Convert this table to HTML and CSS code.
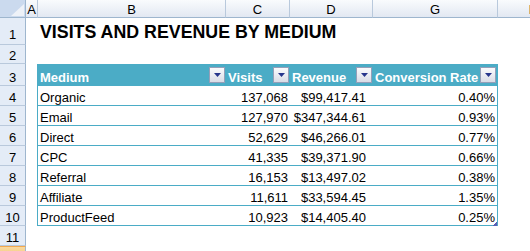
FILE: index.html
```html
<!DOCTYPE html>
<html lang="en">
    <head>
        <meta charset="UTF-8">
        <title>Visits and revenue by medium</title>
        <link rel="stylesheet" href="styles.css">
    </head>

    <body class="sheet">
        <div class="sheet__colheads">
            <div class="sheet__corner">
                <svg class="sheet__corner__icon" width="25" height="17" viewBox="0 0 25 17">
                    <polygon points="24,4 24,16 11,16" fill="#eef2f8"/>
                </svg>
            </div>
            <div class="sheet__colhead sheet__colhead--a">A</div>
            <div class="sheet__colhead sheet__colhead--b">B</div>
            <div class="sheet__colhead sheet__colhead--c">C</div>
            <div class="sheet__colhead sheet__colhead--d">D</div>
            <div class="sheet__colhead sheet__colhead--g">G</div>
            <div class="sheet__colhead sheet__colhead--h">H</div>
        </div>

        <div class="sheet__body">
            <div class="sheet__rowheads">
                <div class="sheet__rowhead sheet__rowhead--r1">1</div>
                <div class="sheet__rowhead sheet__rowhead--r2">2</div>
                <div class="sheet__rowhead sheet__rowhead--r3">3</div>
                <div class="sheet__rowhead">4</div>
                <div class="sheet__rowhead">5</div>
                <div class="sheet__rowhead">6</div>
                <div class="sheet__rowhead">7</div>
                <div class="sheet__rowhead">8</div>
                <div class="sheet__rowhead">9</div>
                <div class="sheet__rowhead">10</div>
                <div class="sheet__rowhead">11</div>
                <div class="sheet__rowhead sheet__rowhead--selected">12</div>
            </div>

            <div class="sheet__cells">
                <h1 class="sheet__title">VISITS AND REVENUE BY MEDIUM</h1>

                <div class="report">
                    <div class="report__head">
                        <div class="report__head__cell">
                            <span>Medium</span>
                            <span class="report__filter"><svg width="7" height="4" viewBox="0 0 7 4"><polygon points="0,0 7,0 3.5,4" fill="#27358c"/></svg></span>
                        </div>
                        <div class="report__head__cell">
                            <span>Visits</span>
                            <span class="report__filter"><svg width="7" height="4" viewBox="0 0 7 4"><polygon points="0,0 7,0 3.5,4" fill="#27358c"/></svg></span>
                        </div>
                        <div class="report__head__cell">
                            <span>Revenue</span>
                            <span class="report__filter"><svg width="7" height="4" viewBox="0 0 7 4"><polygon points="0,0 7,0 3.5,4" fill="#27358c"/></svg></span>
                        </div>
                        <div class="report__head__cell">
                            <span>Conversion Rate</span>
                            <span class="report__filter"><svg width="7" height="4" viewBox="0 0 7 4"><polygon points="0,0 7,0 3.5,4" fill="#27358c"/></svg></span>
                        </div>
                    </div>

                    <div class="report__row">
                        <div class="report__cell">Organic</div>
                        <div class="report__cell report__cell--num">137,068</div>
                        <div class="report__cell report__cell--currency">$99,417.41</div>
                        <div class="report__cell report__cell--num">0.40%</div>
                    </div>
                    <div class="report__row">
                        <div class="report__cell">Email</div>
                        <div class="report__cell report__cell--num">127,970</div>
                        <div class="report__cell report__cell--currency">$347,344.61</div>
                        <div class="report__cell report__cell--num">0.93%</div>
                    </div>
                    <div class="report__row">
                        <div class="report__cell">Direct</div>
                        <div class="report__cell report__cell--num">52,629</div>
                        <div class="report__cell report__cell--currency">$46,266.01</div>
                        <div class="report__cell report__cell--num">0.77%</div>
                    </div>
                    <div class="report__row">
                        <div class="report__cell">CPC</div>
                        <div class="report__cell report__cell--num">41,335</div>
                        <div class="report__cell report__cell--currency">$39,371.90</div>
                        <div class="report__cell report__cell--num">0.66%</div>
                    </div>
                    <div class="report__row">
                        <div class="report__cell">Referral</div>
                        <div class="report__cell report__cell--num">16,153</div>
                        <div class="report__cell report__cell--currency">$13,497.02</div>
                        <div class="report__cell report__cell--num">0.38%</div>
                    </div>
                    <div class="report__row">
                        <div class="report__cell">Affiliate</div>
                        <div class="report__cell report__cell--num">11,611</div>
                        <div class="report__cell report__cell--currency">$33,594.45</div>
                        <div class="report__cell report__cell--num">1.35%</div>
                    </div>
                    <div class="report__row">
                        <div class="report__cell">ProductFeed</div>
                        <div class="report__cell report__cell--num">10,923</div>
                        <div class="report__cell report__cell--currency">$14,405.40</div>
                        <div class="report__cell report__cell--num">0.25%</div>
                    </div>

                    <span class="report__resize"></span>
                </div>
            </div>
        </div>
    </body>
</html>
```

FILE: styles.css
```css
html,
body {
    border: none;
    height: 100%;
    margin: 0 0 0 0;
    padding: 0 0 0 0;
    width: 100%;
}

:root {
    --color-table: #4bacc6;
    --color-table-font: #ffffff;
    --color-head-bg: #e4ecf7;
    --color-head-border: #9eb6ce;
    --color-head-line: #b9c9dc;
    --color-selected: #f8d394;
}

.sheet {
    background-color: #ffffff;
    color: #000000;
    font-family: "Liberation Sans", Arial, sans-serif;
    font-size: 13px;
    overflow: hidden;
}

/* column letters */

.sheet__colheads {
    display: flex;
    height: 18px;
}

.sheet__corner {
    background-color: #cbdaee;
    border-bottom: 1px solid var(--color-head-border);
    border-right: 1px solid var(--color-head-border);
    box-sizing: border-box;
    flex: none;
    width: 26px;
}

.sheet__corner__icon {
    display: block;
}

.sheet__colhead {
    align-items: flex-end;
    background: linear-gradient(#f9fbfd, #e2e8f2);
    border-bottom: 1px solid var(--color-head-border);
    border-right: 1px solid var(--color-head-line);
    box-sizing: border-box;
    display: flex;
    flex: none;
    justify-content: center;
}

.sheet__colhead--a {
    width: 12px;
}

.sheet__colhead--b {
    width: 188px;
}

.sheet__colhead--c {
    width: 64px;
}

.sheet__colhead--d {
    width: 83px;
}

.sheet__colhead--g {
    width: 125px;
}

.sheet__colhead--h {
    width: 72px;
}

/* row numbers */

.sheet__body {
    display: flex;
}

.sheet__rowheads {
    flex: none;
    width: 26px;
}

.sheet__rowhead {
    align-items: flex-end;
    background-color: var(--color-head-bg);
    border-bottom: 1px solid var(--color-head-line);
    border-right: 1px solid var(--color-head-border);
    box-sizing: border-box;
    display: flex;
    height: 20px;
    justify-content: center;
}

.sheet__rowhead--r1 {
    height: 27px;
    padding-bottom: 2px;
}

.sheet__rowhead--r2 {
    height: 19px;
}

.sheet__rowhead--r3 {
    height: 22px;
}

.sheet__rowhead--selected {
    background: linear-gradient(#f9d99f, #f1c15f);
    border-top: 1px solid #f2a94f;
}

/* cells */

.sheet__cells {
    flex: 1;
}

.sheet__title {
    align-items: flex-end;
    box-sizing: border-box;
    display: flex;
    font-size: 17.8px;
    font-weight: bold;
    height: 27px;
    margin: 0 0 19px 0;
    padding: 0 0 2px 14px;
}

.report {
    border-left: 1px solid var(--color-table);
    border-right: 1px solid var(--color-table);
    box-sizing: border-box;
    margin-left: 11px;
    position: relative;
    width: 461px;
}

.report__head,
.report__row {
    display: grid;
    grid-template-columns: 188px 64px 83px 124px;
}

.report__head {
    background-color: var(--color-table);
    color: var(--color-table-font);
    font-weight: bold;
    height: 22px;
}

.report__head__cell {
    align-items: flex-end;
    display: flex;
    justify-content: space-between;
    padding: 0 1px 1px 2px;
    white-space: nowrap;
}

.report__filter {
    align-items: center;
    align-self: center;
    background: linear-gradient(#fbfbfd, #d9dce6);
    border: 1px solid #959fb8;
    box-sizing: border-box;
    display: flex;
    height: 16px;
    justify-content: center;
    width: 16px;
}

.report__filter svg {
    display: block;
}

.report__row {
    border-bottom: 1px solid var(--color-table);
    box-sizing: border-box;
    height: 20px;
}

.report__cell {
    align-items: flex-end;
    display: flex;
    padding: 0 2px;
    white-space: nowrap;
}

.report__cell--num {
    justify-content: flex-end;
}

.report__cell--currency {
    justify-content: flex-end;
    padding-right: 7px;
}

.report__resize {
    background: linear-gradient(135deg, transparent 50%, #5a5fb4 50%);
    bottom: 0;
    height: 4px;
    position: absolute;
    right: 0;
    width: 4px;
}
```
